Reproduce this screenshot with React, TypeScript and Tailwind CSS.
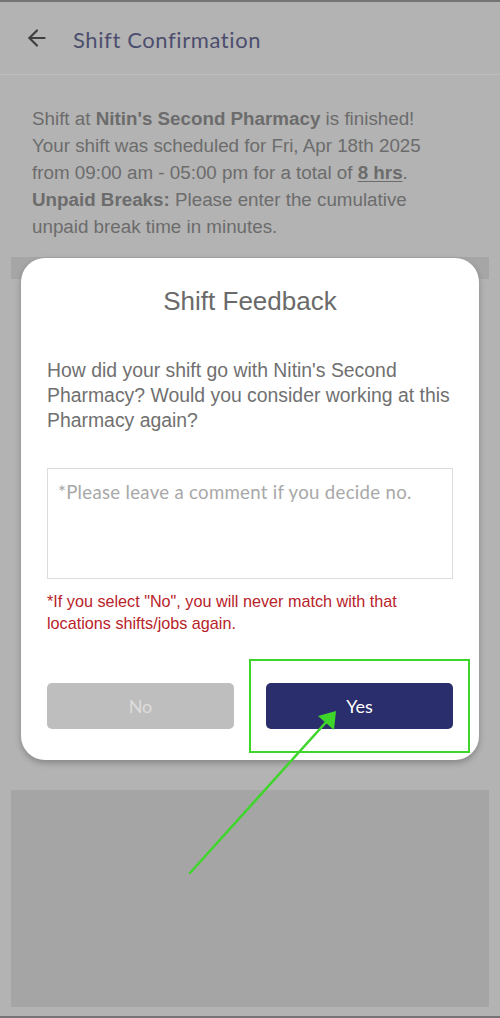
import { ArrowLeft } from "lucide-react";

const sans = { fontFamily: '"Liberation Sans", Arial, sans-serif' };
const geo = { fontFamily: 'Lato, "Open Sans", sans-serif' };

function FeedbackModal() {
  return (
    <div className="absolute left-[21px] top-[256px] w-[458px] h-[502px] bg-white rounded-[24px] shadow-[0_3px_6px_rgba(0,0,0,0.25)]">
      <h2
        className="text-center text-[26px] text-[#6a6a6a] pt-[27px] leading-[32px]"
        style={sans}
      >
        Shift Feedback
      </h2>
      <p
        className="px-[26px] mt-[41px] text-[19.4px] leading-[25px] text-[#707070]"
        style={sans}
      >
        How did your shift go with Nitin's Second Pharmacy? Would you consider
        working at this Pharmacy again?
      </p>
      <div
        className="mx-[26px] mt-[35px] h-[111px] border border-[#dcdcdc] px-[10px] pt-[10px] text-[18.6px] tracking-[0.3px] text-[#a8a8a8]"
        style={geo}
      >
        *Please leave a comment if you decide no.
      </div>
      <p
        className="px-[26px] mt-[11px] text-[16.2px] leading-[22px] text-[#b8232a]"
        style={sans}
      >
        *If you select "No", you will never match with that locations
        shifts/jobs again.
      </p>
      <div className="flex gap-[32px] px-[26px] mt-[49px]">
        <button
          className="flex-1 h-[46px] rounded-[5px] bg-[#bebebe] text-[#dcdcdc] text-[18px]"
          style={geo}
        >
          No
        </button>
        <button
          className="flex-1 h-[46px] rounded-[5px] bg-[#2a2e6c] text-white text-[18px]"
          style={geo}
        >
          Yes
        </button>
      </div>
    </div>
  );
}

export default function App() {
  return (
    <div className="relative w-[500px] h-[1018px] bg-[#b3b3b3] overflow-hidden border-t-2 border-b-2 border-[#747474]">
      <header className="flex items-center h-[73px] border-b border-[#bdbdbd] pl-[24px]">
        <ArrowLeft size={26} strokeWidth={2} className="text-[#3e3e3e]" />
        <h1
          className="ml-[23px] mt-[3px] text-[22px] text-[#4c4e6e] tracking-[0.6px]"
          style={geo}
        >
          Shift Confirmation
        </h1>
      </header>

      <div
        className="pl-[32px] pr-[45px] pt-[30px] text-[18.8px] leading-[27px] text-[#6c6c6c]"
        style={sans}
      >
        <p>
          Shift at <b>Nitin's Second Pharmacy</b> is finished!
        </p>
        <p>
          Your shift was scheduled for Fri, Apr 18th 2025 from 09:00 am - 05:00
          pm for a total of{" "}
          <b className="underline underline-offset-2">8 hrs</b>.
        </p>
        <p>
          <b>Unpaid Breaks:</b> Please enter the cumulative unpaid break time in
          minutes.
        </p>
      </div>

      <div className="mx-[11px] mt-[17px] h-[22px] bg-[#a6a6a6]" />
      <div className="mx-[11px] mt-[511px] h-[217px] bg-[#a5a5a5]" />

      <FeedbackModal />

      <div className="absolute left-[249px] top-[657px] w-[221px] h-[94px] border-2 border-[#3fd62c]" />

      <svg
        className="absolute left-0 top-[-2px] pointer-events-none"
        width="500"
        height="1018"
        viewBox="0 0 500 1018"
      >
        <line
          x1="190"
          y1="873"
          x2="328"
          y2="720"
          stroke="#3fd62c"
          strokeWidth="2.5"
          strokeLinecap="round"
        />
        <polygon points="336,711 334,730 318,716" fill="#3fd62c" />
      </svg>
    </div>
  );
}
